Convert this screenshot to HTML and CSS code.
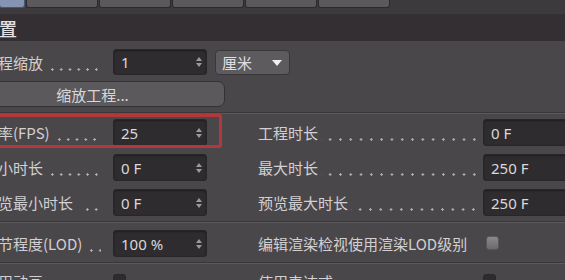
FILE: index.html
```
<!DOCTYPE html>
<html lang="zh">
<head>
<meta charset="utf-8">
<link rel="stylesheet" href="styles.css">
</head>
<body>
<div class="tabs">
  <div class="tab tab-active tab-first"></div>
  <div class="tab"></div>
  <div class="tab"></div>
  <div class="tab"></div>
  <div class="tab"></div>
  <div class="tab"></div>
</div>
<div class="strip"></div>
<div class="header"><span class="header-text">置</span></div>
<div class="panel">
  <div class="row">
    <div class="lab lab-left"><span class="lab-text">工程缩放</span><span class="dots"></span></div>
    <div class="field"><span>1</span><svg class="spin" viewBox="0 0 6 10"><path d="M3 0 L6 4 L0 4 Z M0 6 L6 6 L3 10 Z"/></svg></div>
    <div class="dropdown"><span>厘米</span><svg class="caret" viewBox="0 0 10 6"><path d="M0 0 L10 0 L5 6 Z"/></svg></div>
  </div>
  <div class="row row-btn">
    <div class="button">缩放工程...</div>
  </div>
  <div class="sep"></div>
  <div class="grid">
    <div class="cell-left">
      <div class="lab lab-left"><span class="lab-text">帧率(FPS)</span><span class="dots"></span></div>
      <div class="field"><span>25</span><svg class="spin" viewBox="0 0 6 10"><path d="M3 0 L6 4 L0 4 Z M0 6 L6 6 L3 10 Z"/></svg></div>
      <div class="highlight"></div>
    </div>
    <div class="cell-right">
      <div class="lab lab-right"><span class="lab-text">工程时长</span><span class="dots dots-wide"></span></div>
      <div class="field field-right"><span>0 F</span></div>
    </div>

    <div class="cell-left">
      <div class="lab lab-left"><span class="lab-text">最小时长</span><span class="dots"></span></div>
      <div class="field"><span>0 F</span><svg class="spin" viewBox="0 0 6 10"><path d="M3 0 L6 4 L0 4 Z M0 6 L6 6 L3 10 Z"/></svg></div>
    </div>
    <div class="cell-right">
      <div class="lab lab-right"><span class="lab-text">最大时长</span><span class="dots dots-wide"></span></div>
      <div class="field field-right"><span>250 F</span></div>
    </div>

    <div class="cell-left">
      <div class="lab lab-left"><span class="lab-text">预览最小时长</span><span class="dots dots-short"></span></div>
      <div class="field"><span>0 F</span><svg class="spin" viewBox="0 0 6 10"><path d="M3 0 L6 4 L0 4 Z M0 6 L6 6 L3 10 Z"/></svg></div>
    </div>
    <div class="cell-right">
      <div class="lab lab-right"><span class="lab-text">预览最大时长</span><span class="dots dots-wide"></span></div>
      <div class="field field-right"><span>250 F</span></div>
    </div>
  </div>
  <div class="sep sep-b"></div>
  <div class="grid grid-lod">
    <div class="cell-left">
      <div class="lab lab-left"><span class="lab-text">细节程度(LOD)</span><span class="dots"></span></div>
      <div class="field"><span>100 %</span><svg class="spin" viewBox="0 0 6 10"><path d="M3 0 L6 4 L0 4 Z M0 6 L6 6 L3 10 Z"/></svg></div>
    </div>
    <div class="cell-right">
      <div class="lab lab-right lab-plain"><span class="lab-text">编辑渲染检视使用渲染LOD级别</span></div>
      <div class="check"></div>
    </div>
  </div>
  <div class="sep sep-c"></div>
  <div class="grid grid-last">
    <div class="cell-left">
      <div class="lab lab-left"><span class="lab-text">使用动画</span><span class="dots"></span></div>
      <div class="check check-on"><svg viewBox="0 0 14 14"><path d="M3 7 L6 10 L11 3" /></svg></div>
    </div>
    <div class="cell-right">
      <div class="lab lab-right"><span class="lab-text">使用表达式</span><span class="dots dots-wide"></span></div>
      <div class="check check-on check-r"><svg viewBox="0 0 14 14"><path d="M3 7 L6 10 L11 3" /></svg></div>
    </div>
  </div>
</div>
</body>
</html>
```
FILE: styles.css
```
html, body {
  margin: 0;
  padding: 0;
}
body {
  width: 565px;
  height: 280px;
  overflow: hidden;
  background: #4a474a;
  font-family: "Noto Sans CJK SC", "Noto Sans", sans-serif;
  font-size: 15px;
  color: #d2d0d2;
}
.tabs {
  height: 9px;
  display: flex;
  gap: 1px;
  background: #3d3a3d;
}
.tab {
  width: 72px;
  height: 8px;
  background: #5c595c;
  border: 1px solid #2c2a2c;
  border-top: none;
  border-radius: 0 0 3px 3px;
  box-sizing: border-box;
}
.tab-first {
  width: 26px;
  margin-left: -1px;
}
.tab-active {
  background: #8594b2;
  border-color: #4a5570;
}
.strip {
  height: 5px;
  background: #3d3a3d;
}
.header {
  height: 27px;
  background: #332f33;
  display: flex;
  align-items: center;
  overflow: hidden;
}
.header-text {
  font-size: 18px;
  color: #e2e0e2;
  margin-left: -1px;
  font-weight: 500;
}
.panel {
  padding-top: 8px;
  display: flex;
  flex-direction: column;
}
.row {
  display: flex;
  height: 26px;
  align-items: stretch;
}
.row-btn {
  margin-top: 6px;
}
.lab {
  display: flex;
  align-items: center;
  overflow: hidden;
  white-space: nowrap;
}
.lab-left {
  width: 113px;
  padding-right: 12px;
  box-sizing: border-box;
}
.lab-left .lab-text {
  margin-left: -17px;
}
.lab-right {
  width: 228px;
  padding-left: 3px;
  padding-right: 5px;
  box-sizing: border-box;
}
.dots {
  flex: 1;
  align-self: stretch;
  margin-left: 3px;
  background-image: radial-gradient(circle, #aeacae 1px, transparent 1.4px);
  background-size: 8.8px 3px;
  background-repeat: repeat-x;
  background-position: 2px 19px;
}
.dots-wide {
  background-size: 10.3px 3px;
  background-position: 4px 19px;
}
.dots-short {
  margin-left: 8px;
}
.field {
  width: 94px;
  box-sizing: border-box;
  background: #2e2c2f;
  border: 1px solid #282629;
  border-radius: 3px;
  display: flex;
  align-items: center;
  justify-content: space-between;
  padding: 0 4px 0 7px;
  font-family: "Noto Sans", "Noto Sans CJK SC", sans-serif;
  font-size: 15px;
  color: #dad8da;
  box-shadow: inset 0 1px 2px rgba(0,0,0,0.35);
}
.field-right {
  width: 100px;
}
.spin {
  width: 6px;
  height: 10px;
  fill: #9c9a9c;
}
.dropdown {
  margin-left: 8px;
  width: 75px;
  margin-top: 1px;
  box-sizing: border-box;
  background: #5e5b5e;
  border: 1px solid #3a373a;
  border-radius: 4px;
  display: flex;
  align-items: center;
  justify-content: space-between;
  padding: 0 7px 0 6px;
  color: #e0dee0;
}
.caret {
  width: 10px;
  height: 6px;
  fill: #f0f0f0;
}
.button {
  margin-left: -40px;
  width: 265px;
  box-sizing: border-box;
  background: #5c595c;
  border: 1px solid #343134;
  border-radius: 7px;
  display: flex;
  align-items: center;
  justify-content: center;
  color: #d8d6d8;
}
.sep {
  margin-top: 5px;
  height: 1px;
  background: #3a373a;
  border-bottom: 1px solid #5c595c;
}
.grid {
  margin-top: 5px;
  display: grid;
  grid-template-columns: 255px 1fr;
  grid-auto-rows: 27px;
  row-gap: 8px;
}
.cell-left, .cell-right {
  display: flex;
  position: relative;
}
.highlight {
  position: absolute;
  left: -10px;
  top: -5px;
  width: 232px;
  height: 34px;
  box-sizing: border-box;
  border: 3px solid #b5363b;
  border-radius: 2px;
  pointer-events: none;
}
.sep-b {
  margin-top: 5px;
}
.grid-lod {
  margin-top: 7px;
}
.sep-c {
  margin-top: 5px;
}
.grid-last {
  margin-top: 4px;
}
.check {
  width: 13px;
  height: 14px;
  margin-top: 6px;
  margin-left: 2px;
  box-sizing: border-box;
  border-radius: 3px;
  background: linear-gradient(#8c898c, #6d6a6d);
  border: 1px solid #5a575a;
}
.check-on {
  margin-left: 0;
  background: #2e2c2f;
  border-color: #2a282a;
}
.check-on svg {
  width: 12px;
  height: 12px;
  fill: none;
  stroke: #e6e6e6;
  stroke-width: 2;
}
.lab-plain {
  width: 229px;
}
.check-r {
  margin-left: 0;
}
```
